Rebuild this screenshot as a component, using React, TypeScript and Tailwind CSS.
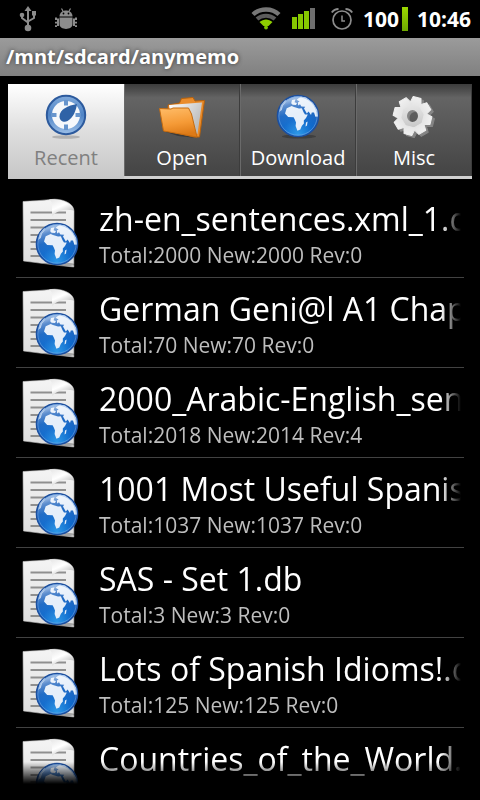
import React from "react";

function Globe({ className }: { className: string }) {
  return (
    <svg viewBox="0 0 48 48" className={className} aria-hidden="true">
      <defs>
        <radialGradient id="sea" cx="0.5" cy="0.95" r="0.95">
          <stop offset="0" stopColor="#2f9be8" />
          <stop offset="0.4" stopColor="#0c68cc" />
          <stop offset="0.8" stopColor="#1259b8" />
          <stop offset="1" stopColor="#6a9cdb" />
        </radialGradient>
        <linearGradient id="gloss" x1="0" y1="0" x2="0.25" y2="1">
          <stop offset="0" stopColor="#fff" stopOpacity="0.6" />
          <stop offset="0.5" stopColor="#fff" stopOpacity="0.08" />
          <stop offset="1" stopColor="#fff" stopOpacity="0" />
        </linearGradient>
      </defs>
      <ellipse cx="25" cy="44.500" rx="17" ry="2" fill="#000" opacity="0.25" />
      <circle cx="24" cy="24" r="20.500" fill="url(#sea)" stroke="#1c4f9f" strokeWidth="1.600" />
      <g fill="#e4eefa">
        <path d="M12.700 16.300 17.700 13.900 20 15 25 16.400 27.800 16.200 29.700 20.600 31 22.400 33.800 22.400 32 26 29.800 28.400 29.900 31.400 27.900 33.800 26.300 37.600 23.400 38.800 21.600 34 22 30.600 20.800 27.400 19.600 25.200 14.200 25 11 21.400Z" />
        <path d="M32 30.500 33.600 29.600 33 33.600 31.500 34.400Z" />
        <path d="M18 8 21.500 7.200 20.600 10.200 23 11 22 13 18.600 12.800 17.200 11.200Z" />
        <path d="M22.600 7.800 26.600 4.800 32 5.600 39 11 43.200 18 44 24.600 41.400 24.800 40 20.400 37.800 20.600 37 23 34.600 19.400 32.800 21.400 30 16.600 31.200 14.800 27.400 14.400 26 12.200 24.200 13.400 23.800 10.400 25.600 9.400Z" />
        <path d="M5 20 6.800 13.200 11.200 8 12.600 9 9 13.400 7.800 18Z" opacity="0.7" />
      </g>
      <circle cx="24" cy="24" r="19.400" fill="url(#gloss)" />
      <circle cx="24" cy="24" r="19.200" fill="none" stroke="#78a9e4" strokeWidth="0.800" opacity="0.700" />
    </svg>
  );
}

function DocumentIcon() {
  return (
    <div className="relative h-[72px] w-[62px] shrink-0">
      <svg viewBox="0 0 62 72" className="h-full w-full" aria-hidden="true">
        <defs>
          <linearGradient id="sheet" x1="0" y1="0" x2="0" y2="1">
            <stop offset="0" stopColor="#f4f4f4" />
            <stop offset="1" stopColor="#dcdcdc" />
          </linearGradient>
          <linearGradient id="fold" x1="0" y1="0" x2="0.7" y2="1">
            <stop offset="0" stopColor="#e4e4e4" />
            <stop offset="0.5" stopColor="#ffffff" />
            <stop offset="1" stopColor="#b5b5b5" />
          </linearGradient>
        </defs>
        <path d="M3 4.500C12 4 22 3.500 31 2.500C40 1 54 5.500 54 14L53.800 70C37 68.500 20 66 3.500 64Z" fill="url(#sheet)" stroke="#bdbdbd" strokeWidth="0.600" />
        <path d="M10.500 15.500H46M10.500 23H46M10.500 30.500H46M10.500 38H40M10.500 45H36M10.500 52H30M10.500 59H30" stroke="#8f8f8f" strokeWidth="2" />
        <path d="M29 2.500C34 4.500 31 13 32.500 19C38 12.500 46 12 54 13.500C51 6.500 40 1.500 29 2.500Z" fill="url(#fold)" />
      </svg>
      <div className="absolute right-0 bottom-0 pr-px pb-px">
        <Globe className="h-[48px] w-[48px]" />
      </div>
    </div>
  );
}

function CompassIcon() {
  return (
    <svg viewBox="0 0 48 48" className="h-[48px] w-[48px]" aria-hidden="true">
      <defs>
        <linearGradient id="rim" x1="0" y1="0" x2="0" y2="1">
          <stop offset="0" stopColor="#7fa9da" />
          <stop offset="0.5" stopColor="#4f84c6" />
          <stop offset="1" stopColor="#9dc0e8" />
        </linearGradient>
      </defs>
      <ellipse cx="24" cy="45" rx="14" ry="1.800" fill="#8f8f8f" opacity="0.550" />
      <circle cx="24" cy="23" r="19.200" fill="url(#rim)" stroke="#2c5a9d" strokeWidth="2" />
      <circle cx="24" cy="23" r="14" fill="#f6f8fb" />
      <path d="M24 8V13.500M24 32.500V38M9 23H14.500M33.500 23H39" stroke="#6795cd" strokeWidth="4" />
      <path d="M35 12C26 13.500 17.500 17.500 17.500 24.500C17.500 29 22 31 25.500 29C31.500 25.500 34 18.500 35 12Z" fill="#2f62a6" />
    </svg>
  );
}

function FolderIcon() {
  return (
    <svg viewBox="0 0 48 48" className="h-[48px] w-[48px]" aria-hidden="true">
      <defs>
        <linearGradient id="flap" x1="0" y1="0" x2="0.2" y2="1">
          <stop offset="0" stopColor="#ffbd69" />
          <stop offset="0.6" stopColor="#f59a36" />
          <stop offset="1" stopColor="#dd7a17" />
        </linearGradient>
        <linearGradient id="paper" x1="0" y1="0" x2="1" y2="0.6">
          <stop offset="0" stopColor="#ffffff" />
          <stop offset="1" stopColor="#b9b9b9" />
        </linearGradient>
      </defs>
      <path d="M5 39 20 44 38 46 20 41Z" fill="#000" opacity="0.3" />
      <path d="M10 13 21.500 11 23.500 6.500 35 5.500 37 9 46.500 8.500 41.500 45 36 45 10 39Z" fill="#ea8c2b" stroke="#b5610d" strokeWidth="1" />
      <path d="M11 13 44 10.500 39.500 42 14 37Z" fill="url(#paper)" />
      <path d="M1.500 16.500 13 17 15 16 30.500 16 33.500 22 39 45 5.500 39Z" fill="url(#flap)" stroke="#c66c10" strokeWidth="1" />
    </svg>
  );
}

const TEETH = [0, 45, 90, 135, 180, 225, 270, 315];

function GearShape({ fill }: { fill: string }) {
  return (
    <g fill={fill}>
      <path fillRule="evenodd" d="M24 10A14 14 0 1 0 24 38A14 14 0 1 0 24 10ZM24 18A5.500 6 0 1 1 24 30A5.500 6 0 1 1 24 18Z" />
      {TEETH.map((a) => (
        <path key={a} d="M18 13 20 5 28 5 30 13Z" stroke={fill} strokeLinejoin="round" strokeWidth="1" transform={`rotate(${a + 14} 24 24)`} />
      ))}
    </g>
  );
}

function GearIcon() {
  return (
    <svg viewBox="0 0 48 48" className="h-[48px] w-[48px]" aria-hidden="true">
      <defs>
        <linearGradient id="metal" gradientUnits="userSpaceOnUse" x1="20" y1="4" x2="24" y2="44">
          <stop offset="0" stopColor="#f2f2f2" />
          <stop offset="1" stopColor="#bdbdbd" />
        </linearGradient>
      </defs>
      <g transform="translate(1 2)"><GearShape fill="#858585" /></g>
      <g transform="translate(-1.500 0)"><GearShape fill="url(#metal)" /></g>
    </svg>
  );
}

function UsbIcon() {
  return (
    <svg viewBox="0 0 18 26" className="h-[26px] w-[18px]" fill="#8c8c8c" aria-hidden="true">
      <path d="M9 0 12.500 5H5.500Z" />
      <circle cx="9" cy="22" r="3.300" />
      <circle cx="3" cy="9" r="2.300" />
      <path d="M13 5H17V9.500H13Z" />
      <path d="M9 4V20M3 9V12L9 16.500M15 9V12L9 15.500" fill="none" stroke="#8c8c8c" strokeWidth="2" />
    </svg>
  );
}

function DebugIcon() {
  return (
    <svg viewBox="0 0 22 22" className="h-[22px] w-[22px]" fill="#8c8c8c" aria-hidden="true">
      <path d="M4.500 8.500C4.500 0.500 17.500 0.500 17.500 8.500Z" />
      <path d="M6.500 0.500 8.500 4M15.500 0.500 13.500 4" stroke="#8c8c8c" strokeWidth="1.200" />
      <path d="M4.500 9.500H17.500V16C17.500 22.500 4.500 22.500 4.500 16Z" />
      <path d="M0 9.500H2V10.500H4V18H2V19H0V17.200H2V15.500H0V13.800H2V12H0ZM22 9.500H20V10.500H18V18H20V19H22V17.200H20V15.500H22V13.800H20V12H22Z" />
      <circle cx="8.500" cy="5.500" r="0.900" fill="#000" />
      <circle cx="13.500" cy="5.500" r="0.900" fill="#000" />
    </svg>
  );
}

function WifiIcon() {
  return (
    <svg viewBox="0 0 30 24" className="h-[24px] w-[30px]" aria-hidden="true">
      <g fill="none">
        <path d="M2 7.500C9 0.800 21 0.800 28 7.500" stroke="#777" strokeWidth="4.400" />
        <path d="M6 12C11 7.500 19 7.500 24 12" stroke="#5c5c5c" strokeWidth="4" />
      </g>
      <path d="M8.500 15C12.500 11.500 17.500 11.500 21.500 15L17.500 19H12.500Z" fill="#8fcf00" />
      <circle cx="15" cy="20.500" r="1.900" fill="#7fc400" />
    </svg>
  );
}

function SignalIcon() {
  return (
    <svg viewBox="0 0 24 22" className="h-[22px] w-[24px]" aria-hidden="true">
      <path d="M0 9H5V21H0ZM6 6H11V21H6ZM12 3H17V21H12Z" fill="#86c800" />
      <path d="M18 0H23V21H18Z" fill="#6e6e6e" />
    </svg>
  );
}

function AlarmIcon() {
  return (
    <svg viewBox="0 0 22 22" className="h-[22px] w-[22px]" fill="none" stroke="#8c8c8c" aria-hidden="true">
      <circle cx="11" cy="12" r="9" strokeWidth="1.700" />
      <path d="M11 7.500V13H14" strokeWidth="1.500" />
      <path d="M0.800 4.500C2.500 2 4.500 1 7.500 1M21.200 4.500C19.500 2 17.500 1 14.500 1" strokeWidth="2" />
    </svg>
  );
}

const tabs = [
  { name: "Recent", icon: <CompassIcon /> },
  { name: "Open", icon: <FolderIcon /> },
  { name: "Download", icon: <Globe className="h-[48px] w-[48px]" /> },
  { name: "Misc", icon: <GearIcon /> },
];

const decks = [
  { title: "zh-en_sentences.xml_1.db", info: "Total:2000 New:2000 Rev:0" },
  { title: "German Geni@l A1 Chapter 1.db", info: "Total:70 New:70 Rev:0" },
  { title: "2000_Arabic-English_sentences.db", info: "Total:2018 New:2014 Rev:4" },
  { title: "1001 Most Useful Spanish Words.db", info: "Total:1037 New:1037 Rev:0" },
  { title: "SAS - Set 1.db", info: "Total:3 New:3 Rev:0" },
  { title: "Lots of Spanish Idioms!.db", info: "Total:125 New:125 Rev:0" },
  { title: "Countries_of_the_World.db", info: "Total:193 New:193 Rev:0" },
];

export default function App() {
  return (
    <div className="flex h-screen flex-col overflow-hidden bg-black font-['Open_Sans','Noto_Sans',sans-serif] text-white">
      <header className="flex h-[38px] shrink-0 items-center justify-between pr-[9px] pl-[19px]">
        <div className="flex items-center gap-[18px]">
          <UsbIcon />
          <DebugIcon />
        </div>
        <div className="flex items-center text-[21px] leading-[38px] font-bold">
          <WifiIcon />
          <span className="ml-[11px]"><SignalIcon /></span>
          <span className="ml-[15px]"><AlarmIcon /></span>
          <span className="ml-[10px]">100</span>
          <span className="ml-[3px] h-[24px] w-[6px] bg-linear-to-b from-[#9bd800] to-[#6fa800]" />
          <span className="ml-[9px]">10:46</span>
        </div>
      </header>

      <h1 className="h-[38px] shrink-0 truncate bg-linear-to-b from-[#9b9b9b] to-[#808080] px-[6px] text-[20px] leading-[37px] font-bold [text-shadow:0_0_4px_#333]">
        /mnt/sdcard/anymemo
      </h1>

      <nav className="mx-2 mt-2 grid h-[95px] shrink-0 grid-cols-4 bg-[#d0d0d0]" role="tablist">
        {tabs.map((tab, i) => (
          <button
            key={tab.name}
            type="button"
            role="tab"
            aria-selected={i === 0}
            className={
              "flex flex-col items-center pt-2 text-[20px] leading-[24px] " +
              (i === 0
                ? "bg-linear-to-b from-white via-[#dedede] to-[#c6c6c6] text-[#808080]"
                : "mb-[3px] border-r border-l border-r-[#3c3c3c] border-l-[#6a6a6a] bg-linear-to-b from-[#3c3c3c] via-[#646464] via-15% to-[#444] text-white")
            }
          >
            {tab.icon}
            <span className="mt-[6px]">{tab.name}</span>
          </button>
        ))}
      </nav>

      <main className="mx-4 mt-[9px] mb-4 min-h-0 flex-1 overflow-hidden [mask-image:linear-gradient(to_bottom,black_calc(100%_-_22px),transparent)]">
        <ul>
          {decks.map((deck) => (
            <li key={deck.title} className="flex h-[90px] items-center gap-[17px] border-b border-[#424242] pr-[3px] pl-[4px]">
              <DocumentIcon />
              <div className="min-w-0 flex-1 pt-1">
                <div className="overflow-hidden text-[32px] leading-[40px] whitespace-nowrap [mask-image:linear-gradient(to_right,black_calc(100%_-_20px),transparent)]">
                  {deck.title}
                </div>
                <div className="text-[21px] leading-[32px] text-[#bebebe]">{deck.info}</div>
              </div>
            </li>
          ))}
        </ul>
      </main>
    </div>
  );
}
